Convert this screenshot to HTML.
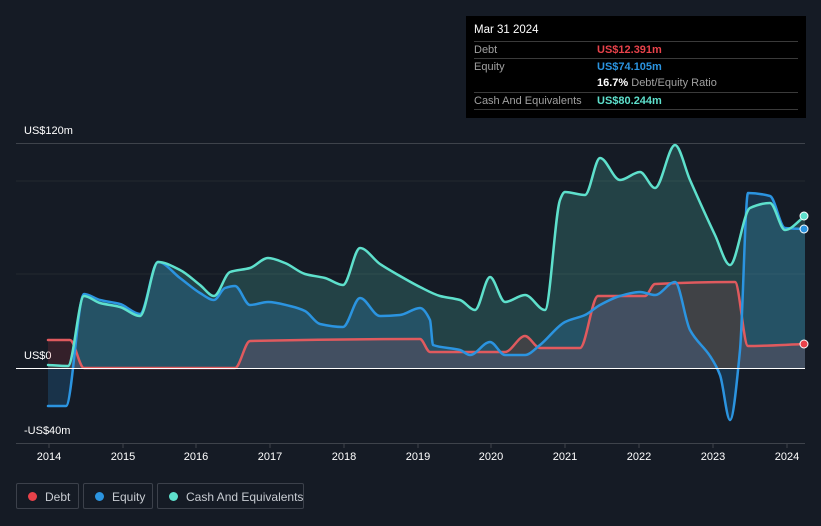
<!DOCTYPE html>
<html><head><meta charset="utf-8"><style>
body{margin:0;width:821px;height:526px;background:#151b25;font-family:"Liberation Sans",sans-serif;overflow:hidden;position:relative}
.tt{position:absolute;left:466px;top:16px;width:340px;height:102px;background:#000;color:#fff;font-size:11px}
.tt .r{position:absolute;left:8px;width:324px;border-top:1px solid #3a3a3a;height:16px;line-height:16px;color:#a0a0a0}
.tt .v{position:absolute;left:123px;font-weight:bold;white-space:nowrap}
.lg{position:absolute;top:483px;height:26px;border:1px solid #3c414b;border-radius:2px;color:#c8ccd2;font-size:12px;line-height:26px;box-sizing:border-box;white-space:nowrap}
.lg i{position:absolute;left:11px;top:8px;width:9px;height:9px;border-radius:50%}
.ax{position:absolute;color:#fff;font-size:11px}
</style></head><body>
<div class="tt">
<div style="position:absolute;left:8px;top:8px;font-size:11.5px">Mar 31 2024</div>
<div class="r" style="top:25px">Debt<span class="v" style="color:#e8424a">US$12.391m</span></div>
<div class="r" style="top:42px">Equity<span class="v" style="color:#2b94e0">US$74.105m</span></div>
<div class="r" style="top:59px;border-top:none"><span class="v" style="color:#fff">16.7% <span style="color:#a0a0a0;font-weight:normal">Debt/Equity Ratio</span></span></div>
<div class="r" style="top:76px">Cash And Equivalents<span class="v" style="color:#5ee0cc">US$80.244m</span></div>
<div class="r" style="top:93px;height:0"></div>
</div>
<div class="ax" style="left:24px;top:125px">US$120m</div>
<div class="ax" style="left:24px;top:350px">US$0</div>
<div class="ax" style="left:24px;top:425px">-US$40m</div>
<svg width="821" height="526" style="position:absolute;left:0;top:0">
<line x1="16" y1="143.5" x2="805" y2="143.5" stroke="#3e434b"/>
<line x1="16" y1="181" x2="805" y2="181" stroke="#232830"/>
<line x1="16" y1="274" x2="805" y2="274" stroke="#232830"/>
<line x1="16" y1="443.5" x2="805" y2="443.5" stroke="#3e434b"/>
<g stroke="#3e434b"><line x1="49" y1="443" x2="49" y2="448"/><line x1="123" y1="443" x2="123" y2="448"/><line x1="196" y1="443" x2="196" y2="448"/><line x1="270" y1="443" x2="270" y2="448"/><line x1="344" y1="443" x2="344" y2="448"/><line x1="418" y1="443" x2="418" y2="448"/><line x1="491" y1="443" x2="491" y2="448"/><line x1="565" y1="443" x2="565" y2="448"/><line x1="639" y1="443" x2="639" y2="448"/><line x1="713" y1="443" x2="713" y2="448"/><line x1="787" y1="443" x2="787" y2="448"/></g>
<g fill="#fff" font-size="11" text-anchor="middle" font-family="Liberation Sans"><text x="49" y="460">2014</text><text x="123" y="460">2015</text><text x="196" y="460">2016</text><text x="270" y="460">2017</text><text x="344" y="460">2018</text><text x="418" y="460">2019</text><text x="491" y="460">2020</text><text x="565" y="460">2021</text><text x="639" y="460">2022</text><text x="713" y="460">2023</text><text x="787" y="460">2024</text></g>
<g stroke-width="2.5" stroke-linejoin="round" stroke-linecap="round">
<path id="fc" fill="#5ee0cc" fill-opacity="0.2" stroke="none"/>
<path id="fe" fill="#2b94e0" fill-opacity="0.2" stroke="none"/>
<path id="fd" fill="#e8424a" fill-opacity="0.15" stroke="none"/>
<path id="ld" fill="none" stroke="#e05a5e"/>
<path id="le" fill="none" stroke="#2b94e0"/>
<path id="lc" fill="none" stroke="#5ee0cc"/>
</g>
<line x1="16" y1="368.5" x2="805" y2="368.5" stroke="#fff"/>
<circle cx="804" cy="216" r="4" fill="#5ee0cc" stroke="#fff"/>
<circle cx="804" cy="229" r="4" fill="#2b94e0" stroke="#fff"/>
<circle cx="804" cy="344" r="4" fill="#e8424a" stroke="#fff"/>
</svg>
<div class="lg" style="left:16px;width:63px"><i style="background:#e8424a"></i><span style="position:absolute;left:28px">Debt</span></div>
<div class="lg" style="left:83px;width:70px"><i style="background:#2b94e0"></i><span style="position:absolute;left:28px">Equity</span></div>
<div class="lg" style="left:157px;width:147px"><i style="background:#5ee0cc"></i><span style="position:absolute;left:28px">Cash And Equivalents</span></div>
<script>
function P(s){return s.trim().split(/\s+/).map(function(p){return p.split(',').map(Number)})}
function smooth(p){var n=p.length,dl=[],m=[];
for(var i=0;i<n-1;i++)dl[i]=(p[i+1][1]-p[i][1])/(p[i+1][0]-p[i][0]);
m[0]=dl[0];m[n-1]=dl[n-2];
for(var i=1;i<n-1;i++){m[i]=(dl[i-1]*dl[i]<=0)?0:2/(1/dl[i-1]+1/dl[i]);}
var d='M'+p[0][0]+','+p[0][1];
for(var i=0;i<n-1;i++){var h=(p[i+1][0]-p[i][0])/3;
d+=' C'+(p[i][0]+h)+','+(p[i][1]+m[i]*h)+' '+(p[i+1][0]-h)+','+(p[i+1][1]-m[i+1]*h)+' '+p[i+1][0]+','+p[i+1][1];}
return d}
var C=P("48,365 68,366 84,296 100,303 120,307 140,316 158,262 180,270 200,285 214,296 230,272 250,268 268,258 285,263 305,274 325,278 343,285 360,248 380,264 400,276 420,287 440,296 460,300 475,310 490,277 505,302 525,295 545,310 560,200 565,192 585,195 600,158 620,180 640,172 655,188 675,145 690,180 715,235 730,265 750,208 770,203 785,230 805,216");
var E=P("48,406 66,406 84,294 100,300 120,304 140,314 158,262 180,278 200,293 214,300 225,288 235,286 250,305 268,302 290,306 305,311 320,324 343,327 360,298 380,316 400,315 420,308 430,320 433,345 460,350 470,355 490,342 505,355 525,355 540,345 565,322 585,315 600,305 620,296 640,292 655,295 675,282 690,330 710,356 720,375 730,420 740,350 748,193 770,196 785,228 805,229");
var D=P("48,340 70,340 84,368 235,368 250,341 420,339 430,352 505,352 525,336 540,348 580,348 598,296 645,296 655,284 735,282 748,346 805,344");
[[C,'c'],[E,'e'],[D,'d']].forEach(function(x){var s=smooth(x[0]);document.getElementById('l'+x[1]).setAttribute('d',s);document.getElementById('f'+x[1]).setAttribute('d',s+' L805,368 L48,368 Z');});
</script>
</body></html>
